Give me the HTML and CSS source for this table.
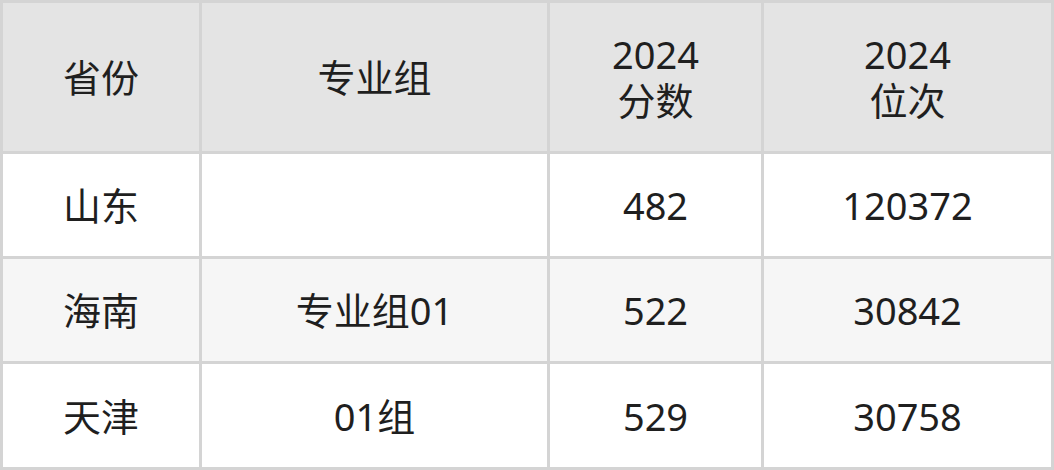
FILE: index.html
```html
<!DOCTYPE html>
<html lang="zh">
<head>
<meta charset="utf-8">
<link rel="stylesheet" href="styles.css">
</head>
<body>
<table class="score-table">
  <colgroup>
    <col class="c1"><col class="c2"><col class="c3"><col class="c4">
  </colgroup>
  <thead>
    <tr class="head">
      <th>省份</th>
      <th>专业组</th>
      <th>2024<br>分数</th>
      <th>2024<br>位次</th>
    </tr>
  </thead>
  <tbody>
    <tr class="r1"><td>山东</td><td></td><td>482</td><td>120372</td></tr>
    <tr class="r2"><td>海南</td><td>专业组01</td><td>522</td><td>30842</td></tr>
    <tr class="r3"><td>天津</td><td>01组</td><td>529</td><td>30758</td></tr>
  </tbody>
</table>
</body>
</html>
```

FILE: styles.css
```css
html, body {
  margin: 0;
  padding: 0;
  background: #ffffff;
}
.score-table {
  width: 1054px;
  border-collapse: collapse;
  table-layout: fixed;
  font-family: "Noto Sans", "Noto Sans CJK SC", sans-serif;
  font-size: 38px;
  color: #1f1f1f;
}
.c1 { width: 199px; }
.c2 { width: 348px; }
.c3 { width: 214px; }
.c4 { width: 290px; }
.score-table th,
.score-table td {
  border: 3px solid #d4d4d4;
  text-align: center;
  vertical-align: middle;
  padding: 0;
  font-weight: normal;
  line-height: 46px;
}
.head { height: 151px; background: #e4e4e4; }
.r1 { height: 105px; background: #ffffff; }
.r2 { height: 105px; background: #f6f6f6; }
.r3 { height: 106px; background: #ffffff; }
```
